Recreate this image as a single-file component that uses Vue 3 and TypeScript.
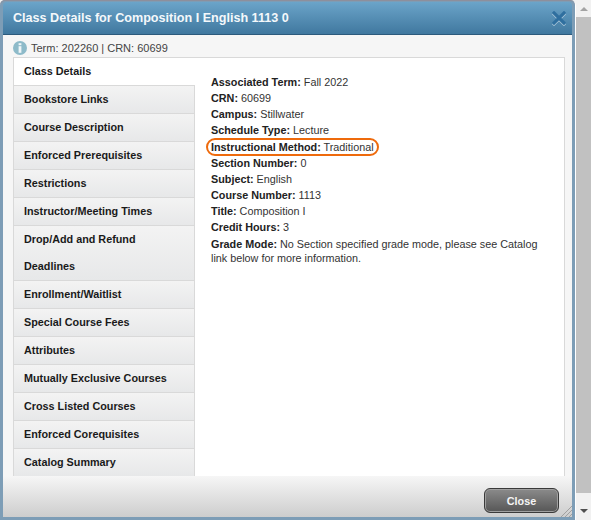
<script setup lang="ts">
const tabs: string[] = [
  'Bookstore Links',
  'Course Description',
  'Enforced Prerequisites',
  'Restrictions',
  'Instructor/Meeting Times',
  'Drop/Add and Refund Deadlines',
  'Enrollment/Waitlist',
  'Special Course Fees',
  'Attributes',
  'Mutually Exclusive Courses',
  'Cross Listed Courses',
  'Enforced Corequisites',
  'Catalog Summary',
]
const details: { label: string; value: string; mark?: boolean }[] = [
  { label: 'Associated Term:', value: 'Fall 2022' },
  { label: 'CRN:', value: '60699' },
  { label: 'Campus:', value: 'Stillwater' },
  { label: 'Schedule Type:', value: 'Lecture' },
  { label: 'Instructional Method:', value: 'Traditional', mark: true },
  { label: 'Section Number:', value: '0' },
  { label: 'Subject:', value: 'English' },
  { label: 'Course Number:', value: '1113' },
  { label: 'Title:', value: 'Composition I' },
  { label: 'Credit Hours:', value: '3' },
  { label: 'Grade Mode:', value: 'No Section specified grade mode, please see Catalog link below for more information.' },
]
</script>

<template>
  <div class="page">
    <div class="dialog">
      <header class="head">
        <h1 class="title">Class Details for Composition I English 1113 0</h1>
        <svg class="x" width="14" height="15" viewBox="0 0 14 15" aria-label="Close">
          <path d="M2 3 L12 13 M12 3 L2 13" stroke="#d5e4ee" stroke-width="3.2" stroke-linecap="square" opacity=".7" />
          <path d="M2 2 L12 12 M12 2 L2 12" stroke="#2f6f9f" stroke-width="3.2" stroke-linecap="square" />
        </svg>
      </header>
      <div class="body">
        <div class="info">
          <svg class="i" width="14" height="14" viewBox="0 0 14 14">
            <circle cx="7" cy="7" r="7" fill="#8dbac9" />
            <rect x="5.6" y="2.2" width="2.8" height="2" fill="#eef5f8" />
            <rect x="5.6" y="5.2" width="2.8" height="6.6" fill="#eef5f8" />
          </svg>
          <span>Term: 202260 | CRN: 60699</span>
        </div>
        <div class="panel">
          <nav class="side">
            <div class="tab active">Class Details</div>
            <div v-for="t in tabs" :key="t" class="tab">{{ t }}</div>
          </nav>
          <section class="content">
            <div v-for="d in details" :key="d.label" class="row">
              <span :class="{ mark: d.mark }"><b>{{ d.label }}</b> {{ d.value }}</span>
            </div>
          </section>
        </div>
      </div>
      <footer class="foot">
        <button class="close">Close</button>
        <svg class="grip" width="12" height="12" viewBox="0 0 12 12">
          <path d="M12 1 L1 12 M12 5 L5 12 M12 9 L9 12" stroke="#a0a0a0" stroke-width="1" />
        </svg>
      </footer>
    </div>
    <aside class="scroll">
      <div class="arrow up"></div>
      <div class="thumb"></div>
      <div class="arrow down"></div>
    </aside>
  </div>
</template>

<style>
html, body { margin: 0; padding: 0; overflow: hidden; }
</style>

<style scoped>
.page {
  width: 591px;
  height: 520px;
  display: flex;
  font-family: "Liberation Sans", Arial, sans-serif;
  background: #f1f1f1;
}
.dialog {
  width: 576px;
  height: 520px;
  flex: none;
  box-sizing: border-box;
  padding: 2px 3px 3px 3px;
  background: #7d9db6;
  display: flex;
  flex-direction: column;
  border-right: 1px solid #fff;
  border-radius: 5px 5px 0 0;
  box-shadow: inset 0 1px 0 #8d8f9c;
}
.head {
  height: 33px;
  flex: none;
  box-sizing: border-box;
  display: flex;
  align-items: center;
  justify-content: space-between;
  padding: 0 6px 0 10px;
  background: linear-gradient(#6ba4c9, #40789f);
  border-bottom: 1px solid #2c5a7c;
  border-radius: 4px 4px 0 0;
}
.title {
  margin: 0;
  font-size: 12.6px;
  font-weight: 700;
  color: #f4f8fb;
}
.body {
  flex: 1;
  min-height: 0;
  background: #f6f6f6;
  padding: 3px 7px 0 10px;
  display: flex;
  flex-direction: column;
}
.info {
  height: 19px;
  flex: none;
  display: flex;
  align-items: center;
  gap: 4px;
  font-size: 11px;
  color: #444;
}
.panel {
  height: 420px;
  flex: none;
  display: flex;
  box-sizing: border-box;
  border: 1px solid #d9d9d9;
  background: #fff;
}
.side {
  width: 181px;
  flex: none;
  display: flex;
  flex-direction: column;
}
.tab {
  box-sizing: border-box;
  padding: 0 10px;
  font-size: 10.8px;
  font-weight: 700;
  line-height: 27px;
  color: #1a1a1a;
  background: linear-gradient(#f3f3f3, #e7e8e9);
  border-top: 1px solid #d9d9d9;
  border-right: 1px solid #d9d9d9;
}
.tab.active {
  background: #fff;
  border-top: 0;
  border-right: 0;
}
.content {
  flex: 1;
  padding: 16.8px 20px 0 16px;
  font-size: 10.8px;
  line-height: 14px;
  color: #333;
}
.row { margin-bottom: 2.2px; }
.content b { color: #222; }
.mark {
  display: inline-block;
  position: relative;
}
.mark::after {
  content: "";
  position: absolute;
  left: -5px;
  right: -5px;
  top: -2px;
  bottom: -2px;
  border: 2px solid #ee6a0c;
  border-radius: 10px;
}
.foot {
  height: 41px;
  flex: none;
  box-sizing: border-box;
  display: flex;
  justify-content: flex-end;
  align-items: flex-start;
  padding: 12px 13px 0 0;
  background: linear-gradient(#f6f6f6, #cdcdcd);
  position: relative;
}
.close {
  width: 75px;
  height: 25px;
  border: 1px solid #3a3a3a;
  border-radius: 6px;
  background: linear-gradient(#8b8b8b, #565656);
  box-shadow: inset 0 0 0 1px #a0a0a0;
  color: #f5f5f5;
  font: 700 10.8px "Liberation Sans", Arial, sans-serif;
  padding: 0;
}
.grip { position: absolute; right: 0; bottom: 0; }
.scroll {
  width: 15px;
  height: 520px;
  flex: none;
  display: flex;
  flex-direction: column;
  align-items: center;
  background: #f1f1f1;
}
.thumb {
  width: 15px;
  height: 476px;
  margin-top: 6px;
  background: #c1c1c1;
}
.arrow {
  width: 0;
  height: 0;
  border-left: 4px solid transparent;
  border-right: 4px solid transparent;
}
.arrow.up { margin-top: 7px; border-bottom: 4px solid #a3a3a3; }
.arrow.down { margin-top: auto; margin-bottom: 7px; border-top: 4px solid #505050; }
</style>
